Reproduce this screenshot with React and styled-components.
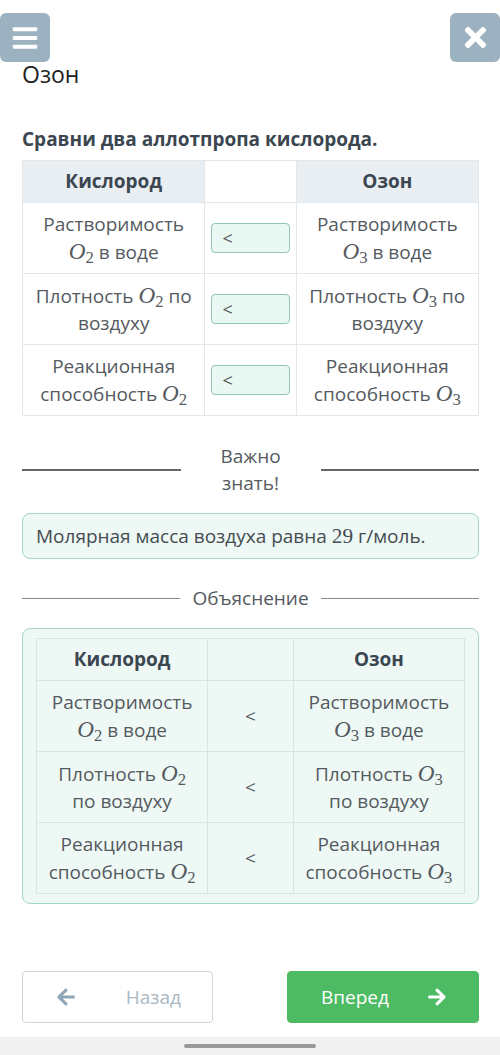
import React from 'react'
import styled, { createGlobalStyle } from 'styled-components'
import { FaBars, FaTimes, FaArrowLeft, FaArrowRight } from 'react-icons/fa'

const Global = createGlobalStyle`
  body {
    margin: 0;
    background: #fff;
    font-family: "Open Sans", "Noto Sans", sans-serif;
  }
`

const Page = styled.div`
  min-height: 1055px;
  display: flex;
  flex-direction: column;
`

const TopBar = styled.div`
  display: flex;
  justify-content: space-between;
  margin-top: 13px;
`

const IconButton = styled.button`
  width: 50px;
  height: 49px;
  border: none;
  border-radius: 6px;
  background: #9db2c1;
  color: #fff;
  display: flex;
  align-items: center;
  justify-content: center;
  font-size: ${props => props.$size};
  padding: 0;
`

const Content = styled.div`
  padding: 0 21px 0 22px;
  display: flex;
  flex-direction: column;
`

const Title = styled.h1`
  margin: 0;
  font-size: 23px;
  line-height: 24px;
  font-weight: 400;
  color: #222;
`

const Question = styled.h2`
  margin: 40px 0 8px;
  font-size: 19px;
  line-height: 26px;
  font-weight: 700;
  color: #3b4651;
`

const Table = styled.table`
  width: 100%;
  border-collapse: collapse;
  table-layout: fixed;
`

const Col = styled.col`
  width: ${props => props.$w};
`

const Cell = styled.td`
  border: 1px solid ${props => props.$line};
  text-align: center;
  vertical-align: middle;
  font-size: 19px;
  line-height: 27px;
  color: ${props => (props.$head ? '#3b4651' : '#555a5f')};
  font-weight: ${props => (props.$head ? 700 : 400)};
  background: ${props => props.$bg || 'transparent'};
  height: ${props => (props.$head ? '41px' : '70px')};
  padding: 0 ${props => props.$pad || '8px'};
`

const Select = styled.div`
  height: 28px;
  border: 1px solid #8fc7b3;
  border-radius: 4px;
  background: #eaf8f4;
  text-align: left;
  padding-left: 10px;
  font-size: 18px;
  line-height: 28px;
  color: #555;
`

const MathVar = styled.span`
  font-family: "Liberation Serif", "DejaVu Serif", serif;
  font-style: italic;
  font-size: 1.22em;
  white-space: nowrap;
  sub {
    font-style: normal;
    font-size: 0.72em;
    vertical-align: -0.22em;
    line-height: 0;
  }
`

const Num = styled.span`
  font-family: "Liberation Serif", "DejaVu Serif", serif;
  font-size: 1.12em;
`

const Divider = styled.div`
  display: grid;
  grid-template-columns: 1fr ${props => props.$mid} 1fr;
  column-gap: ${props => props.$gap};
  align-items: center;
  margin-top: ${props => props.$top};
  font-size: 19px;
  line-height: 27px;
  color: #555a5f;
  text-align: center;
`

const Rule = styled.div`
  height: ${props => props.$thick};
  background: ${props => props.$color};
`

const Note = styled.div`
  margin-top: 16px;
  padding: 9px 13px;
  border: 1px solid #a3d6c4;
  border-radius: 8px;
  background: #eef8f5;
  font-size: 19px;
  line-height: 26px;
  color: #454b50;
`

const Explain = styled.div`
  margin-top: 16px;
  padding: 9px 13px;
  border: 1px solid #a3d6c4;
  border-radius: 8px;
  background: #eef8f5;
`

const Footer = styled.div`
  margin-top: auto;
  padding: 0 21px 14px 22px;
  display: grid;
  grid-template-columns: 191px 192px;
  justify-content: space-between;
`

const NavButton = styled.button`
  height: 52px;
  border-radius: 4px;
  border: 1px solid ${props => (props.$primary ? '#4dbb63' : '#cfd6db')};
  background: ${props => (props.$primary ? '#4dbb63' : '#fff')};
  color: ${props => (props.$primary ? '#fff' : '#a9b8c3')};
  display: flex;
  align-items: center;
  justify-content: space-between;
  padding: 0 31px 0 33px;
  font-family: "Open Sans", sans-serif;
  font-size: 19px;
  svg {
    font-size: 20px;
    color: ${props => (props.$primary ? '#fff' : '#8fa6b6')};
  }
`

const HomeBar = styled.div`
  height: 18px;
  background: #f1f1f1;
  display: flex;
  justify-content: center;
  padding-top: 7px;
  box-sizing: border-box;
`

const Pill = styled.div`
  width: 132px;
  height: 4px;
  border-radius: 2px;
  background: #999;
`

const O = ({ n }) => (
  <MathVar>O<sub>{n}</sub></MathVar>
)

const rows = [
  [<>Растворимость <O n="2" /> в воде</>, <>Растворимость <O n="3" /> в воде</>],
  [<>Плотность <O n="2" /> по воздуху</>, <>Плотность <O n="3" /> по воздуху</>],
  [<>Реакционная способность <O n="2" /></>, <>Реакционная способность <O n="3" /></>]
]

const Cols = () => (
  <colgroup>
    <Col $w="40%" />
    <Col $w="20%" />
    <Col $w="40%" />
  </colgroup>
)

export default function App() {
  return (
    <Page>
      <Global />
      <TopBar>
        <IconButton $size="28px"><FaBars /></IconButton>
        <IconButton $size="31px"><FaTimes /></IconButton>
      </TopBar>
      <Content>
        <Title>Озон</Title>
        <Question>Сравни два аллотпропа кислорода.</Question>
        <Table>
          <Cols />
          <tbody>
            <tr>
              <Cell as="th" $head $line="#e3e7ea" $bg="#e9eef2">Кислород</Cell>
              <Cell as="th" $head $line="#e3e7ea"></Cell>
              <Cell as="th" $head $line="#e3e7ea" $bg="#e9eef2">Озон</Cell>
            </tr>
            {rows.map((r, i) => (
              <tr key={i}>
                <Cell $line="#e3e7ea">{r[0]}</Cell>
                <Cell $line="#e3e7ea" $pad="6px"><Select>&lt;</Select></Cell>
                <Cell $line="#e3e7ea">{r[1]}</Cell>
              </tr>
            ))}
          </tbody>
        </Table>

        <Divider $top="27px" $mid="80px" $gap="30px">
          <Rule $thick="1.5px" $color="#666" />
          <span>Важно знать!</span>
          <Rule $thick="1.5px" $color="#666" />
        </Divider>

        <Note>Молярная масса воздуха равна <Num>29</Num> г/моль.</Note>

        <Divider $top="26px" $mid="auto" $gap="12px">
          <Rule $thick="1px" $color="#888" />
          <span>Объяснение</span>
          <Rule $thick="1px" $color="#888" />
        </Divider>

        <Explain>
          <Table>
            <Cols />
            <tbody>
              <tr>
                <Cell as="th" $head $line="#d8e5e1">Кислород</Cell>
                <Cell as="th" $head $line="#d8e5e1"></Cell>
                <Cell as="th" $head $line="#d8e5e1">Озон</Cell>
              </tr>
              {rows.map((r, i) => (
                <tr key={i}>
                  <Cell $line="#d8e5e1">{r[0]}</Cell>
                  <Cell $line="#d8e5e1">&lt;</Cell>
                  <Cell $line="#d8e5e1">{r[1]}</Cell>
                </tr>
              ))}
            </tbody>
          </Table>
        </Explain>
      </Content>

      <Footer>
        <NavButton><FaArrowLeft /><span>Назад</span></NavButton>
        <NavButton $primary><span>Вперед</span><FaArrowRight /></NavButton>
      </Footer>
      <HomeBar><Pill /></HomeBar>
    </Page>
  )
}
